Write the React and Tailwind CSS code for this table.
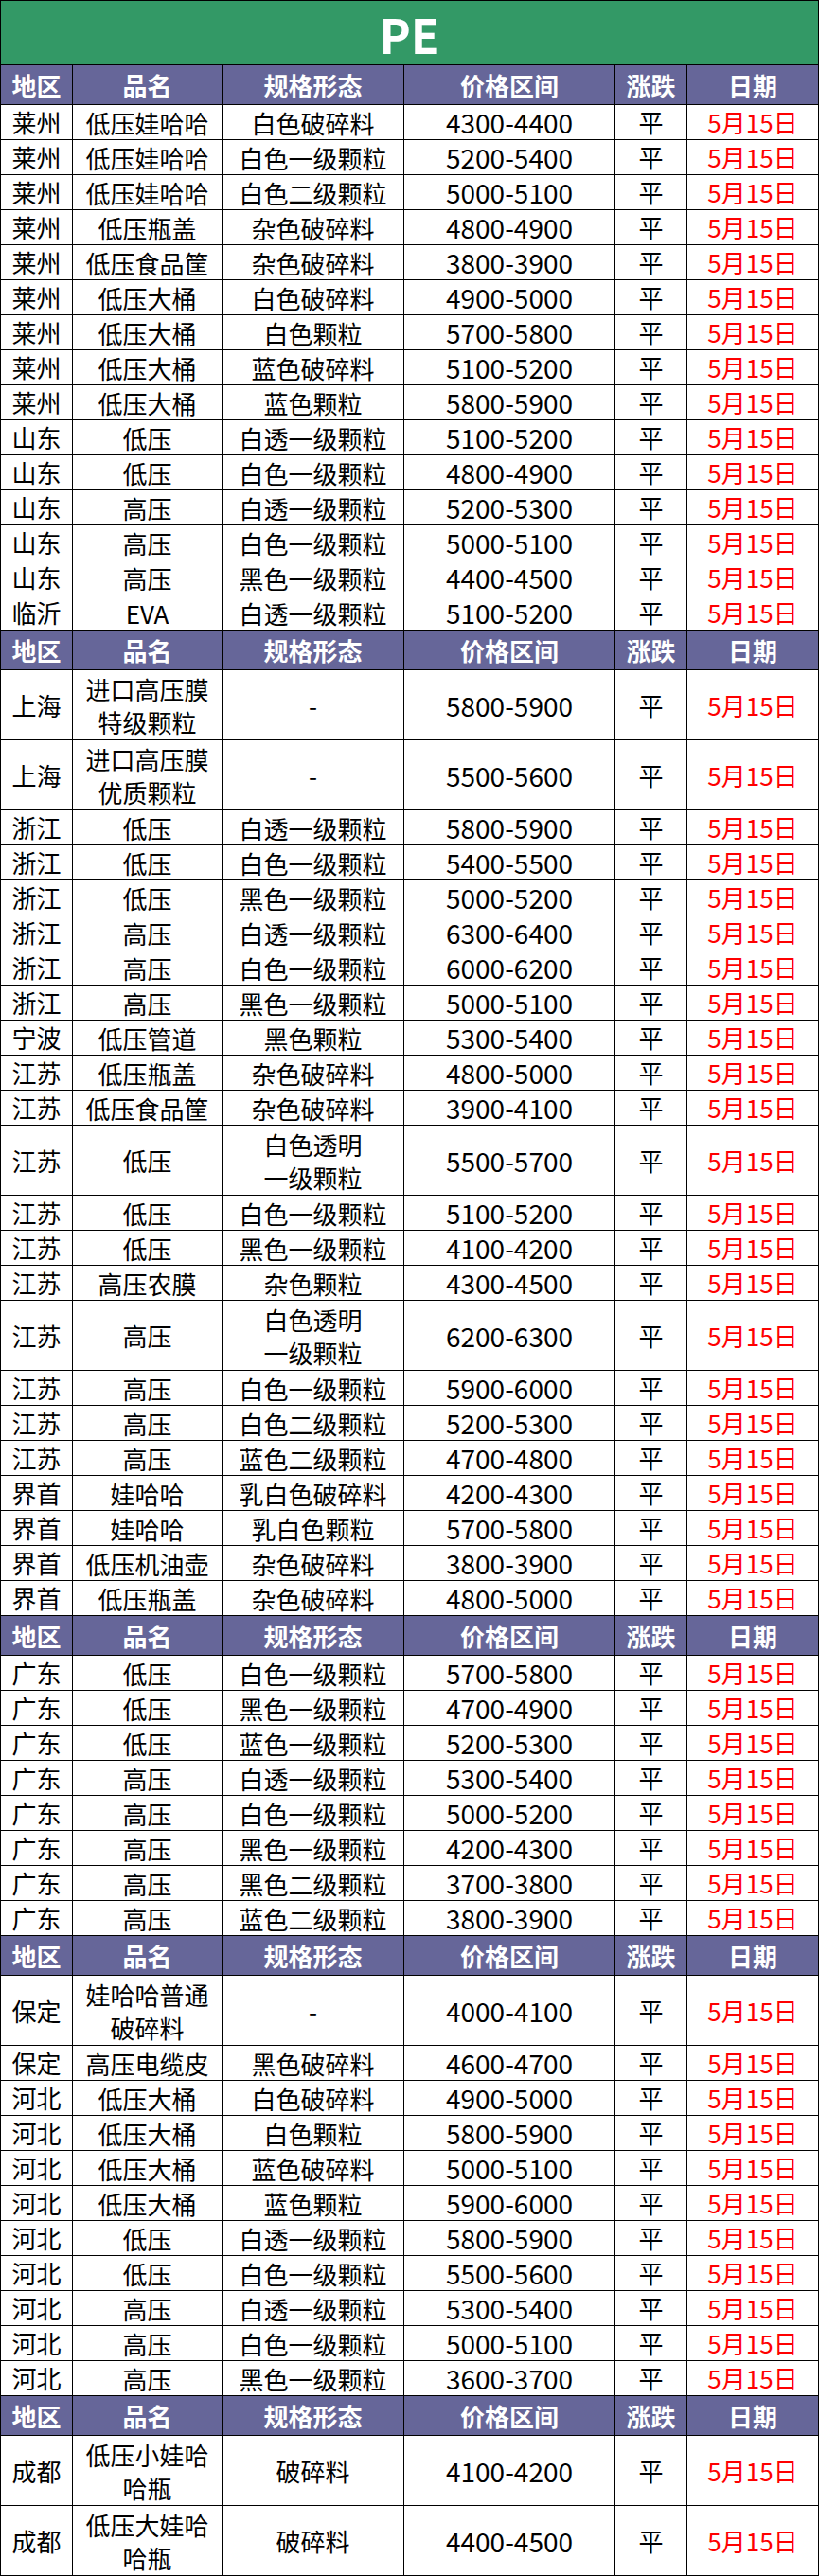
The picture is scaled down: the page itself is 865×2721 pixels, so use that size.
import React from "react";

const sections = [
  [
    ["莱州", "低压娃哈哈", "白色破碎料", "4300-4400"],
    ["莱州", "低压娃哈哈", "白色一级颗粒", "5200-5400"],
    ["莱州", "低压娃哈哈", "白色二级颗粒", "5000-5100"],
    ["莱州", "低压瓶盖", "杂色破碎料", "4800-4900"],
    ["莱州", "低压食品筐", "杂色破碎料", "3800-3900"],
    ["莱州", "低压大桶", "白色破碎料", "4900-5000"],
    ["莱州", "低压大桶", "白色颗粒", "5700-5800"],
    ["莱州", "低压大桶", "蓝色破碎料", "5100-5200"],
    ["莱州", "低压大桶", "蓝色颗粒", "5800-5900"],
    ["山东", "低压", "白透一级颗粒", "5100-5200"],
    ["山东", "低压", "白色一级颗粒", "4800-4900"],
    ["山东", "高压", "白透一级颗粒", "5200-5300"],
    ["山东", "高压", "白色一级颗粒", "5000-5100"],
    ["山东", "高压", "黑色一级颗粒", "4400-4500"],
    ["临沂", "EVA", "白透一级颗粒", "5100-5200"],
  ],
  [
    ["上海", "进口高压膜\n特级颗粒", "-", "5800-5900"],
    ["上海", "进口高压膜\n优质颗粒", "-", "5500-5600"],
    ["浙江", "低压", "白透一级颗粒", "5800-5900"],
    ["浙江", "低压", "白色一级颗粒", "5400-5500"],
    ["浙江", "低压", "黑色一级颗粒", "5000-5200"],
    ["浙江", "高压", "白透一级颗粒", "6300-6400"],
    ["浙江", "高压", "白色一级颗粒", "6000-6200"],
    ["浙江", "高压", "黑色一级颗粒", "5000-5100"],
    ["宁波", "低压管道", "黑色颗粒", "5300-5400"],
    ["江苏", "低压瓶盖", "杂色破碎料", "4800-5000"],
    ["江苏", "低压食品筐", "杂色破碎料", "3900-4100"],
    ["江苏", "低压", "白色透明\n一级颗粒", "5500-5700"],
    ["江苏", "低压", "白色一级颗粒", "5100-5200"],
    ["江苏", "低压", "黑色一级颗粒", "4100-4200"],
    ["江苏", "高压农膜", "杂色颗粒", "4300-4500"],
    ["江苏", "高压", "白色透明\n一级颗粒", "6200-6300"],
    ["江苏", "高压", "白色一级颗粒", "5900-6000"],
    ["江苏", "高压", "白色二级颗粒", "5200-5300"],
    ["江苏", "高压", "蓝色二级颗粒", "4700-4800"],
    ["界首", "娃哈哈", "乳白色破碎料", "4200-4300"],
    ["界首", "娃哈哈", "乳白色颗粒", "5700-5800"],
    ["界首", "低压机油壶", "杂色破碎料", "3800-3900"],
    ["界首", "低压瓶盖", "杂色破碎料", "4800-5000"],
  ],
  [
    ["广东", "低压", "白色一级颗粒", "5700-5800"],
    ["广东", "低压", "黑色一级颗粒", "4700-4900"],
    ["广东", "低压", "蓝色一级颗粒", "5200-5300"],
    ["广东", "高压", "白透一级颗粒", "5300-5400"],
    ["广东", "高压", "白色一级颗粒", "5000-5200"],
    ["广东", "高压", "黑色一级颗粒", "4200-4300"],
    ["广东", "高压", "黑色二级颗粒", "3700-3800"],
    ["广东", "高压", "蓝色二级颗粒", "3800-3900"],
  ],
  [
    ["保定", "娃哈哈普通\n破碎料", "-", "4000-4100"],
    ["保定", "高压电缆皮", "黑色破碎料", "4600-4700"],
    ["河北", "低压大桶", "白色破碎料", "4900-5000"],
    ["河北", "低压大桶", "白色颗粒", "5800-5900"],
    ["河北", "低压大桶", "蓝色破碎料", "5000-5100"],
    ["河北", "低压大桶", "蓝色颗粒", "5900-6000"],
    ["河北", "低压", "白透一级颗粒", "5800-5900"],
    ["河北", "低压", "白色一级颗粒", "5500-5600"],
    ["河北", "高压", "白透一级颗粒", "5300-5400"],
    ["河北", "高压", "白色一级颗粒", "5000-5100"],
    ["河北", "高压", "黑色一级颗粒", "3600-3700"],
  ],
  [
    ["成都", "低压小娃哈\n哈瓶", "破碎料", "4100-4200"],
    ["成都", "低压大娃哈\n哈瓶", "破碎料", "4400-4500"],
  ],
];

const cell = "flex items-center justify-center text-center border-r border-b border-black";

const HeaderRow = () => (
  <div className="flex h-[42px] bg-[#666699] text-white font-bold text-[26px]">
    <div className={`${cell} w-[76px]`}>地区</div>
    <div className={`${cell} w-[158px]`}>品名</div>
    <div className={`${cell} w-[192px]`}>规格形态</div>
    <div className={`${cell} w-[223px]`}>价格区间</div>
    <div className={`${cell} w-[76px]`}>涨跌</div>
    <div className={`${cell} flex-1`}>日期</div>
  </div>
);

const Row = ({ r }) => {
  const tall = r[1].includes("\n") || r[2].includes("\n");
  return (
    <div className={`flex text-[26px] text-black ${tall ? "h-[74px]" : "h-[37px]"}`}>
      <div className={`${cell} w-[76px]`}>{r[0]}</div>
      <div className={`${cell} w-[158px] whitespace-pre-line leading-[35px]`}>{r[1]}</div>
      <div className={`${cell} w-[192px] whitespace-pre-line leading-[35px]`}>{r[2]}</div>
      <div className={`${cell} w-[223px] text-[28px]`}>{r[3]}</div>
      <div className={`${cell} w-[76px]`}>平</div>
      <div className={`${cell} flex-1 text-[#ff0000]`}>5月15日</div>
    </div>
  );
};

export default function App() {
  return (
    <div className="w-[865px] bg-white border-l border-t border-black font-['Noto_Sans_CJK_SC',sans-serif] leading-none">
      <div className="h-[68px] bg-[#339966] border-r border-b border-black flex items-center justify-center text-white font-bold text-[50px]">
        PE
      </div>
      {sections.map((rows, i) => (
        <div key={i}>
          <HeaderRow />
          {rows.map((r, j) => (
            <Row key={j} r={r} />
          ))}
        </div>
      ))}
    </div>
  );
}
